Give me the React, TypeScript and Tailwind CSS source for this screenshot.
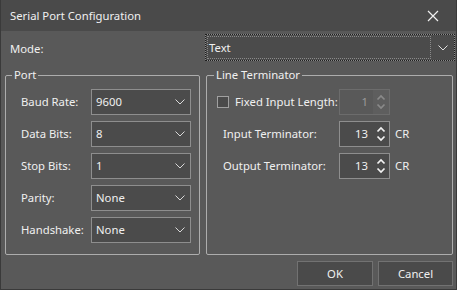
import React from "react";

const Chevron = ({ color = "#d8d8d8" }: { color?: string }) => (
  <svg width="10" height="6" viewBox="0 0 10 6" fill="none">
    <path d="M0.5 0.5 L5 5 L9.5 0.5" stroke={color} strokeWidth="1" />
  </svg>
);

const Combo = ({ value }: { value: string }) => (
  <div className="w-[100px] h-[26px] border border-[#8e8e8e] bg-[#4b4b4b] flex items-center pl-[4px] pr-[5px]">
    <span className="flex-1">{value}</span>
    <Chevron />
  </div>
);

const SpinArrows = ({ color }: { color: string }) => (
  <svg width="10" height="20" viewBox="0 0 10 20" fill="none">
    <path d="M1.5 7.5 L5 4 L8.5 7.5" stroke={color} strokeWidth="1.7" />
    <path d="M1.5 12.5 L5 16 L8.5 12.5" stroke={color} strokeWidth="1.7" />
  </svg>
);

const Spinner = ({ value, disabled }: { value: string; disabled?: boolean }) => (
  <div
    className={
      disabled
        ? "w-[51px] h-[26px] border border-[#6c6c6c] bg-[#595959] flex text-[#9a9a9a]"
        : "w-[51px] h-[26px] border border-[#8e8e8e] bg-[#4b4b4b] flex"
    }
  >
    <div className="flex-1 flex items-center justify-end pr-[5px]">{value}</div>
    <div
      className={
        disabled
          ? "w-[16px] flex items-center justify-center bg-[#5e5e5e]"
          : "w-[16px] flex items-center justify-center"
      }
    >
      <SpinArrows color={disabled ? "#8a8a8a" : "#f2f2f2"} />
    </div>
  </div>
);

const Row = ({ label, value }: { label: string; value: string }) => (
  <div className="flex items-center justify-between">
    <span>{label}</span>
    <Combo value={value} />
  </div>
);

export default function App() {
  return (
    <div className="w-[457px] h-[290px] bg-[#595959] border-x border-b border-[#3a3a3a] flex flex-col text-[11.3px] leading-[16px] text-[#f0f0f0] font-['Noto_Sans',sans-serif] whitespace-nowrap">
      <div className="h-[31px] bg-[#4a4a4a] flex items-center pl-[9px] pr-[17px] shrink-0">
        <span className="flex-1 text-[11.3px]">Serial Port Configuration</span>
        <svg width="12" height="12" viewBox="0 0 12 12" fill="none">
          <path d="M1 1 L11 11 M11 1 L1 11" stroke="#f0f0f0" strokeWidth="1.2" />
        </svg>
      </div>

      <div className="flex items-center h-[27px] mt-[3px] pl-[9px] pr-[1px] shrink-0">
        <span className="flex-1 pt-[2px]">Mode:</span>
        <div className="w-[250px] h-[27px] border border-dotted border-[#1e1e1e] bg-[#8a8a8a]">
          <div className="w-full h-full bg-[#4b4b4b] flex items-center">
            <div className="ml-[1px] w-[224px] h-[23px] border border-dotted border-[#8a8a8a] flex items-center pl-[1px]">
              Text
            </div>
            <div className="flex-1 flex justify-center">
              <Chevron color="#e0e0e0" />
            </div>
          </div>
        </div>
      </div>

      <div className="flex gap-[6px] pl-[4px] pr-[3px] mt-[14px] shrink-0">
        <div className="relative w-[195px] h-[180px] border border-[#adadad] rounded-[2px] pt-[13px] pl-[15px] pr-[8px] flex flex-col gap-[6px]">
          <span className="absolute -top-[9px] left-[6px] px-[2px] bg-[#595959]">Port</span>
          <Row label="Baud Rate:" value="9600" />
          <Row label="Data Bits:" value="8" />
          <Row label="Stop Bits:" value="1" />
          <Row label="Parity:" value="None" />
          <Row label="Handshake:" value="None" />
        </div>

        <div className="relative w-[247px] h-[180px] border border-[#adadad] rounded-[2px] pt-[13px] pl-[10px] flex flex-col gap-[6px]">
          <span className="absolute -top-[9px] left-[7px] px-[2px] bg-[#595959]">Line Terminator</span>
          <div className="flex items-center h-[26px]">
            <div className="w-[12px] h-[12px] border border-[#a0a0a0] bg-[#4b4b4b]" />
            <span className="ml-[6px] w-[104px]">Fixed Input Length:</span>
            <Spinner value="1" disabled />
          </div>
          <div className="flex items-center h-[26px]">
            <span className="ml-[6px] w-[116px]">Input Terminator:</span>
            <Spinner value="13" />
            <span className="ml-[5px]">CR</span>
          </div>
          <div className="flex items-center h-[26px]">
            <span className="ml-[6px] w-[116px]">Output Terminator:</span>
            <Spinner value="13" />
            <span className="ml-[5px]">CR</span>
          </div>
        </div>
      </div>

      <div className="flex justify-end gap-[5px] pr-[3px] mt-[6px]">
        <div className="w-[76px] h-[25px] border border-[#727272] bg-[#4a4a4a] flex items-center justify-center">OK</div>
        <div className="w-[75px] h-[25px] border border-[#727272] bg-[#4a4a4a] flex items-center justify-center">Cancel</div>
      </div>
    </div>
  );
}
